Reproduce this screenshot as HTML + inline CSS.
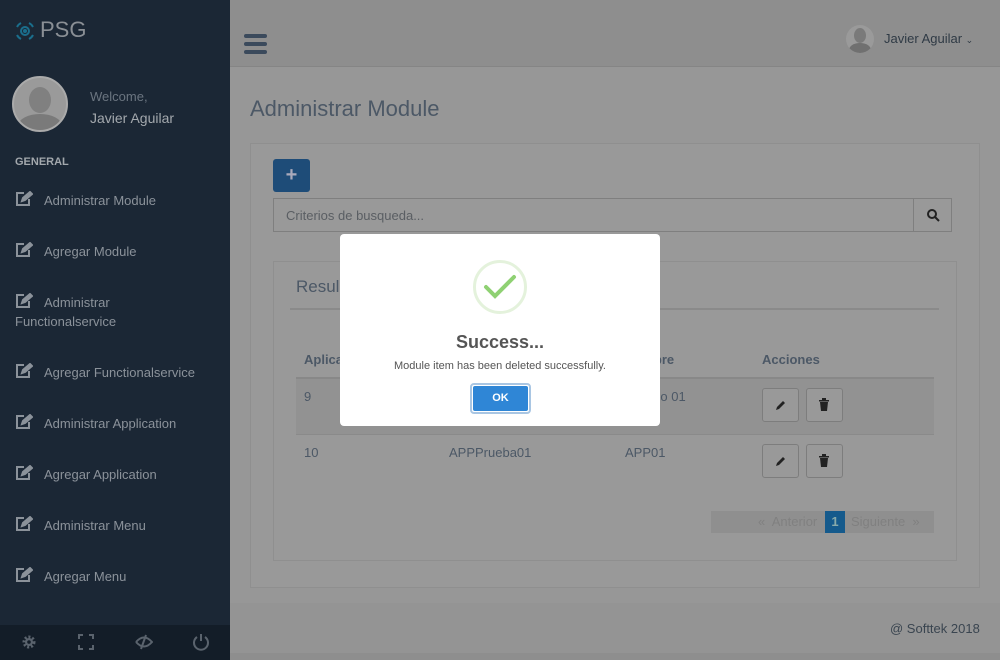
<!DOCTYPE html>
<html><head><meta charset="utf-8"><style>
*{margin:0;padding:0;box-sizing:border-box}
body{width:1000px;height:660px;overflow:hidden;font-family:"Liberation Sans",sans-serif;background:#979797;position:relative}
.a{position:absolute}
.sb{left:0;top:0;width:230px;height:660px;background:#1b2735}
.mi{position:absolute;left:15px;font-size:13px;color:#8b929a;line-height:19px;width:200px}
.mi svg{vertical-align:-2px;margin-right:11px}
.t{font-size:13px;color:#4c5866}
.btn{position:absolute;width:37px;height:34px;border:1px solid #7d7d7d;border-radius:3px;background:#999}
</style></head><body>
<div class="a sb">
 <svg class="a" style="left:14px;top:20px" width="22" height="22" viewBox="0 0 22 22" fill="none" stroke="#1a6e8c" stroke-width="2"><path d="M3 7A9 9 0 0 1 7 3M15 3a9 9 0 0 1 4 4M19 15a9 9 0 0 1-4 4M7 19a9 9 0 0 1-4-4"/><circle cx="11" cy="11" r="4"/><circle cx="11" cy="11" r="1" fill="#1a6e8c"/></svg>
 <div class="a" style="left:40px;top:17px;font-size:22px;color:#8a8f95">PSG</div>
 <div class="a" style="left:12px;top:76px;width:56px;height:56px;border-radius:50%;background:#9a9a9a;border:2px solid #aaa;overflow:hidden">
  <div class="a" style="left:15px;top:9px;width:22px;height:26px;border-radius:50%;background:#808080"></div>
  <div class="a" style="left:4px;top:36px;width:44px;height:24px;border-radius:50% 50% 0 0;background:#7a7a7a"></div>
 </div>
 <div class="a" style="left:90px;top:89px;font-size:13px;color:#6b7580">Welcome,</div>
 <div class="a" style="left:90px;top:110px;font-size:14px;color:#a3a8ad">Javier Aguilar</div>
 <div class="a" style="left:15px;top:156px;font-size:11px;font-weight:bold;color:#a3a8ad">GENERAL</div>
 <div class="mi" style="top:191px"><svg width="18" height="16" viewBox="0 0 18 16" fill="none" stroke="#8b929a" stroke-width="2"><path d="M9 2H2v12h12V8"/><path d="M7 10l1-3 7-6 2 2-7 6z" fill="#8b929a"/></svg>Administrar Module</div>
 <div class="mi" style="top:242px"><svg width="18" height="16" viewBox="0 0 18 16" fill="none" stroke="#8b929a" stroke-width="2"><path d="M9 2H2v12h12V8"/><path d="M7 10l1-3 7-6 2 2-7 6z" fill="#8b929a"/></svg>Agregar Module</div>
 <div class="mi" style="top:293px"><svg width="18" height="16" viewBox="0 0 18 16" fill="none" stroke="#8b929a" stroke-width="2"><path d="M9 2H2v12h12V8"/><path d="M7 10l1-3 7-6 2 2-7 6z" fill="#8b929a"/></svg>Administrar<br>Functionalservice</div>
 <div class="mi" style="top:363px"><svg width="18" height="16" viewBox="0 0 18 16" fill="none" stroke="#8b929a" stroke-width="2"><path d="M9 2H2v12h12V8"/><path d="M7 10l1-3 7-6 2 2-7 6z" fill="#8b929a"/></svg>Agregar Functionalservice</div>
 <div class="mi" style="top:414px"><svg width="18" height="16" viewBox="0 0 18 16" fill="none" stroke="#8b929a" stroke-width="2"><path d="M9 2H2v12h12V8"/><path d="M7 10l1-3 7-6 2 2-7 6z" fill="#8b929a"/></svg>Administrar Application</div>
 <div class="mi" style="top:465px"><svg width="18" height="16" viewBox="0 0 18 16" fill="none" stroke="#8b929a" stroke-width="2"><path d="M9 2H2v12h12V8"/><path d="M7 10l1-3 7-6 2 2-7 6z" fill="#8b929a"/></svg>Agregar Application</div>
 <div class="mi" style="top:516px"><svg width="18" height="16" viewBox="0 0 18 16" fill="none" stroke="#8b929a" stroke-width="2"><path d="M9 2H2v12h12V8"/><path d="M7 10l1-3 7-6 2 2-7 6z" fill="#8b929a"/></svg>Administrar Menu</div>
 <div class="mi" style="top:567px"><svg width="18" height="16" viewBox="0 0 18 16" fill="none" stroke="#8b929a" stroke-width="2"><path d="M9 2H2v12h12V8"/><path d="M7 10l1-3 7-6 2 2-7 6z" fill="#8b929a"/></svg>Agregar Menu</div>
 <div class="a" style="left:0;top:625px;width:230px;height:35px;background:#131d28">
  <svg class="a" style="left:21px;top:9px" width="16" height="16" viewBox="0 0 16 16"><circle cx="8" cy="8" r="5" fill="none" stroke="#5a636d" stroke-width="3" stroke-dasharray="2 1.8"/><circle cx="8" cy="8" r="4" fill="#5a636d"/><circle cx="8" cy="8" r="1.8" fill="#131d28"/></svg>
  <svg class="a" style="left:78px;top:9px" width="16" height="16" viewBox="0 0 16 16" stroke="#5a636d" stroke-width="2" fill="none"><path d="M1 5V1h4M11 1h4v4M15 11v4h-4M5 15H1v-4"/></svg>
  <svg class="a" style="left:135px;top:9px" width="18" height="16" viewBox="0 0 18 16" stroke="#5a636d" stroke-width="2" fill="none"><path d="M1 8q8-9 16 0q-8 9-16 0"/><path d="M11 1L6 15"/></svg>
  <svg class="a" style="left:192px;top:8px" width="18" height="18" viewBox="0 0 18 18" stroke="#5a636d" stroke-width="2" fill="none"><path d="M5 4a7 7 0 1 0 8 0M9 1v7"/></svg>
 </div>
</div>
<div class="a" style="left:230px;top:0;width:770px;height:67px;background:#8e8e8e;border-bottom:1px solid #858585">
 <div class="a" style="left:14px;top:34px;width:23px;height:4px;border-radius:2px;background:#3b4a5c;box-shadow:0 8px 0 #3b4a5c,0 16px 0 #3b4a5c"></div>
 <div class="a" style="left:616px;top:25px;width:28px;height:28px;border-radius:50%;background:#9a9a9a;overflow:hidden"><div class="a" style="left:8px;top:3px;width:12px;height:15px;border-radius:50%;background:#7a7a7a"></div><div class="a" style="left:3px;top:18px;width:22px;height:14px;border-radius:50% 50% 0 0;background:#707070"></div></div>
 <div class="a" style="left:654px;top:31px;font-size:13px;color:#2f3a45">Javier Aguilar <span style="font-size:9px">&#8964;</span></div>
</div>
<div class="a" style="left:250px;top:96px;font-size:22px;color:#4c5866">Administrar Module</div>
<div class="a" style="left:250px;top:143px;width:730px;height:445px;background:#999;border:1px solid #8f8f8f"></div>
<div class="a" style="left:273px;top:159px;width:37px;height:33px;background:#1e4c78;border-radius:3px;color:#aab;font-size:20px;font-weight:bold;text-align:center;line-height:32px">+</div>
<div class="a" style="left:273px;top:198px;width:679px;height:34px;border:1px solid #7f7f7f;background:#999">
 <div class="a" style="left:12px;top:9px;font-size:13px;color:#5a5e63">Criterios de busqueda...</div>
 <div class="a" style="left:639px;top:0;width:1px;height:32px;background:#7f7f7f"></div>
 <svg class="a" style="left:652px;top:9px" width="14" height="14" viewBox="0 0 14 14" stroke="#222" stroke-width="2" fill="none"><circle cx="6" cy="6" r="4"/><path d="M9 9l4 4"/></svg>
</div>
<div class="a" style="left:273px;top:261px;width:684px;height:300px;border:1px solid #8f8f8f"></div>
<div class="a" style="left:296px;top:277px;font-size:17px;color:#4c5866">Resul</div>
<div class="a" style="left:290px;top:308px;width:649px;height:2px;background:#8a8a8a"></div>
<div class="a t" style="left:304px;top:352px;font-weight:bold">Aplicacion</div>
<div class="a t" style="left:625px;top:352px;font-weight:bold">Nombre</div>
<div class="a t" style="left:762px;top:352px;font-weight:bold">Acciones</div>
<div class="a" style="left:296px;top:377px;width:638px;height:2px;background:#888"></div>
<div class="a" style="left:296px;top:379px;width:638px;height:56px;background:#929292;border-bottom:1px solid #8a8a8a"></div>
<div class="a t" style="left:304px;top:389px">9</div>
<div class="a t" style="left:625px;top:389px">Modulo 01</div>
<div class="a t" style="left:304px;top:445px">10</div>
<div class="a t" style="left:449px;top:445px">APPPrueba01</div>
<div class="a t" style="left:625px;top:445px">APP01</div>
<div class="btn" style="left:762px;top:388px"></div><div class="btn" style="left:806px;top:388px"></div>
<div class="btn" style="left:762px;top:444px"></div><div class="btn" style="left:806px;top:444px"></div>
<svg class="a" style="left:775px;top:399px" width="12" height="12" viewBox="0 0 12 12"><path d="M1 11l1-3 6-6 2 2-6 6z" fill="#222"/></svg>
<svg class="a" style="left:775px;top:455px" width="12" height="12" viewBox="0 0 12 12"><path d="M1 11l1-3 6-6 2 2-6 6z" fill="#222"/></svg>
<svg class="a" style="left:818px;top:398px" width="12" height="13" viewBox="0 0 12 13" fill="#222"><path d="M1 2h10v1.5H1zM4 0h4v2H4zM2 4h8l-1 9H3z"/></svg>
<svg class="a" style="left:818px;top:454px" width="12" height="13" viewBox="0 0 12 13" fill="#222"><path d="M1 2h10v1.5H1zM4 0h4v2H4zM2 4h8l-1 9H3z"/></svg>
<div class="a" style="left:711px;top:511px;width:223px;height:22px;background:#8f8f8f;font-size:13px;color:#808080;line-height:22px">
 <span class="a" style="left:47px">«&nbsp; Anterior</span>
 <span class="a" style="left:114px;width:20px;height:22px;background:#155a8c;color:#8aa;text-align:center;font-weight:bold">1</span>
 <span class="a" style="left:140px">Siguiente &nbsp;»</span>
</div>
<div class="a" style="left:230px;top:603px;width:770px;height:50px;background:#949494"></div>
<div class="a" style="left:230px;top:653px;width:770px;height:7px;background:#8e8e8e"></div>
<div class="a" style="left:890px;top:621px;font-size:13px;color:#3a4550">@ Softtek 2018</div>
<div class="a" style="left:340px;top:234px;width:320px;height:192px;background:#fff;border-radius:4px">
 <div class="a" style="left:133px;top:26px;width:54px;height:54px;border-radius:50%;border:3px solid #e4f2dc"></div>
 <svg class="a" style="left:143px;top:40px" width="34" height="26" viewBox="0 0 34 26" fill="none" stroke="#8fd173" stroke-width="4" stroke-linecap="round"><path d="M3 13l9 9L31 3"/></svg>
 <div class="a" style="left:0;top:98px;width:320px;text-align:center;font-size:18px;font-weight:bold;color:#555">Success...</div>
 <div class="a" style="left:0;top:126px;width:320px;text-align:center;font-size:11px;color:#555">Module item has been deleted successfully.</div>
 <div class="a" style="left:130px;top:149px;width:61px;height:31px;border:2px solid #a9c6e3;border-radius:4px;padding:1px">
  <div style="width:100%;height:100%;background:#2f86d6;border-radius:2px;color:#fff;font-size:11px;font-weight:bold;text-align:center;line-height:25px">OK</div>
 </div>
</div>
</body></html>
